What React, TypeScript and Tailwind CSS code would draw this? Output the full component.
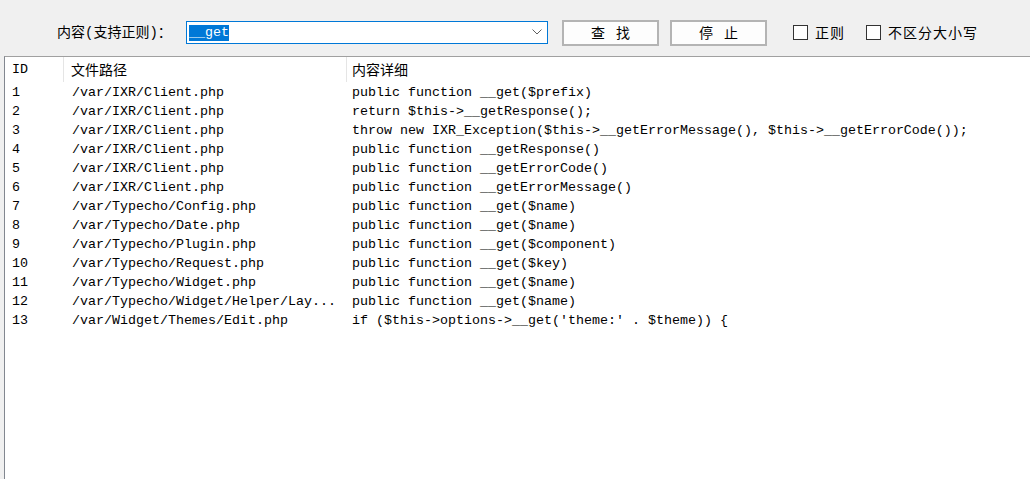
const rows: [string, string, string][] = [
  ["1", "/var/IXR/Client.php", "public function __get($prefix)"],
  ["2", "/var/IXR/Client.php", "return $this->__getResponse();"],
  ["3", "/var/IXR/Client.php", "throw new IXR_Exception($this->__getErrorMessage(), $this->__getErrorCode());"],
  ["4", "/var/IXR/Client.php", "public function __getResponse()"],
  ["5", "/var/IXR/Client.php", "public function __getErrorCode()"],
  ["6", "/var/IXR/Client.php", "public function __getErrorMessage()"],
  ["7", "/var/Typecho/Config.php", "public function __get($name)"],
  ["8", "/var/Typecho/Date.php", "public function __get($name)"],
  ["9", "/var/Typecho/Plugin.php", "public function __get($component)"],
  ["10", "/var/Typecho/Request.php", "public function __get($key)"],
  ["11", "/var/Typecho/Widget.php", "public function __get($name)"],
  ["12", "/var/Typecho/Widget/Helper/Lay...", "public function __get($name)"],
  ["13", "/var/Widget/Themes/Edit.php", "if ($this->options->__get('theme:' . $theme)) {"],
];

const cjk = "font-['Noto_Sans_CJK_SC',sans-serif]";
const mono = "font-['Liberation_Mono','Noto_Sans_CJK_SC',monospace]";

function Button({ label }: { label: string }) {
  return (
    <button
      type="button"
      className={`flex h-[26px] w-[97px] items-center justify-center border-2 border-[#b4b4b4] bg-[#fdfdfd] pl-[11px] text-[14px] tracking-[11px] text-black ${cjk}`}
    >
      {label}
    </button>
  );
}

function Check({ label }: { label: string }) {
  return (
    <label className={`flex items-center gap-[7px] text-[14px] tracking-[1px] text-black ${cjk}`}>
      <span className="h-[15px] w-[15px] border border-[#333] bg-white" />
      {label}
    </label>
  );
}

export default function App() {
  return (
    <div className="h-[479px] w-[1030px] overflow-hidden bg-[#f0f0f0]">
      <div className="flex h-[56px] items-center pt-[9px] pl-[57px]">
        <span className={`w-[129px] text-[14px] text-black ${cjk}`}>
          内容<span className={mono}>(</span>支持正则<span className={mono}>)</span>：
        </span>
        <div className="flex h-[23px] w-[362px] items-center border border-[#0078d7] bg-white pl-[2px] pr-[5px]">
          <span className={`bg-[#0078d7] text-[13.33px] leading-[16px] text-white ${mono}`}>__get</span>
          <div className="flex-1" />
          <svg width="10" height="6" viewBox="0 0 10 6" className="mb-[1px]">
            <path d="M0.5 0.5 L5 5 L9.5 0.5" fill="none" stroke="#606060" strokeWidth="1" />
          </svg>
        </div>
        <div className="ml-[14px]">
          <Button label="查找" />
        </div>
        <div className="ml-[11px]">
          <Button label="停止" />
        </div>
        <div className="ml-[26px]">
          <Check label="正则" />
        </div>
        <div className="ml-[21px]">
          <Check label="不区分大小写" />
        </div>
      </div>
      <div className="ml-[4px] h-[423px] border-t border-l border-t-[#a0a0a0] border-l-[#828790] bg-white">
        <div className="flex h-[26px] items-start text-black">
          <div className={`flex h-[25px] w-[59px] items-center border-r border-[#e5e5e5] pl-[7px] text-[13.33px] ${mono}`}>ID</div>
          <div className={`flex h-[25px] w-[283px] items-center border-r border-[#e5e5e5] pl-[7px] text-[14px] ${cjk}`}>文件路径</div>
          <div className={`flex h-[25px] items-center pl-[5px] text-[14px] ${cjk}`}>内容详细</div>
        </div>
        {rows.map(([id, path, detail]) => (
          <div key={id} className={`flex h-[19px] items-center whitespace-pre text-[13.33px] text-black ${mono}`}>
            <div className="w-[60px] pl-[7px]">{id}</div>
            <div className="w-[283px] pl-[7px]">{path}</div>
            <div className="pl-[4px]">{detail}</div>
          </div>
        ))}
      </div>
    </div>
  );
}
